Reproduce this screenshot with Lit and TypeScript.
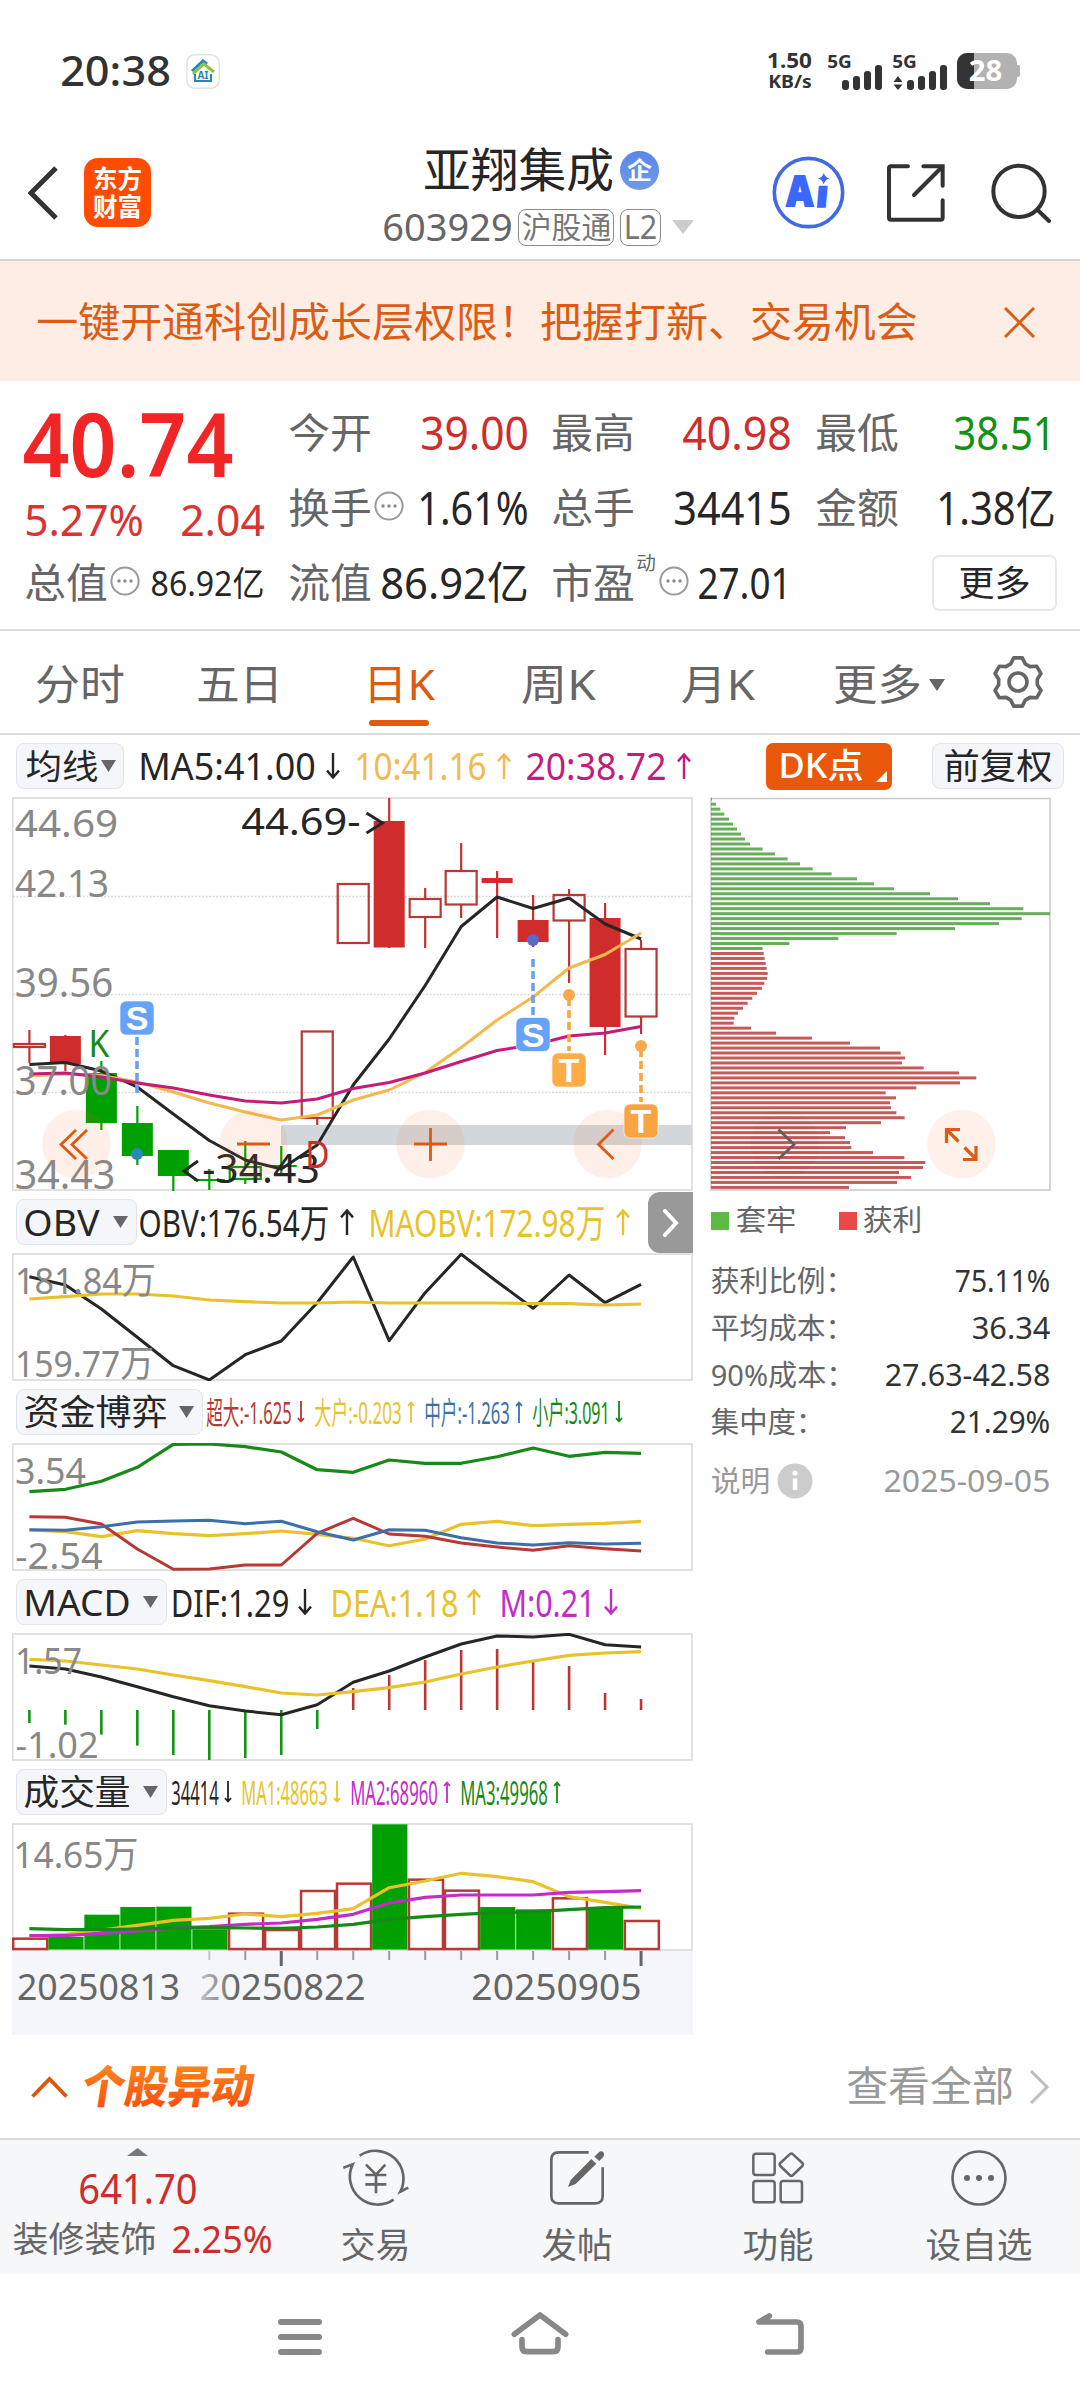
import { LitElement, html, svg, css } from "lit";
import { customElement } from "lit/decorators.js";

const RED = "#cf2d2b";
const LINE_RED = "#b83835";
const GREEN = "#00a000";
const DARK = "#262626";
const GREY = "#666666";
const YELLOW = "#e9c22b";
const AMBER = "#f3b94f";
const MAGENTA = "#c31c7b";
const VIOLET = "#c42cc9";
const BLUE = "#3d6fab";
const DEEP_GREEN = "#168a16";
const ORANGE = "#dc5a12";

/* Side bearing of the outer glyphs once the text is squeezed to width w. */
const bearing = (text: string, w: number, size: number) => {
  let em = 0;
  for (const c of text) em += c > "\u2e80" ? 1 : ".:".includes(c) ? 0.27 : c === "-" ? 0.32 : c === "%" ? 0.83 : 0.57;
  return size * 0.045 * Math.min(1, w / (em * size));
};

/* Text fitted to an exact ink width; the box is as tall as the capitals. */
const fit = (text: string, w: number, size: number, fill = DARK, weight = 400, cls = "") => {
  const h = Math.round(size * 0.714);
  const b = bearing(text, w, size);
  return html`<svg class="fit ${cls}" width=${w} height=${h} viewBox="0 0 ${w} ${h}">
    <text x=${-b} y=${h} font-size=${size} font-weight=${weight} fill=${fill}
      textLength=${w + 2 * b} lengthAdjust="spacingAndGlyphs">${text}</text>
  </svg>`;
};

const label = (text: string, x: number, base: number, w: number, size: number, fill = "#888888", weight = 400) => {
  const b = bearing(text, w, size);
  return svg`<text x=${x - b} y=${base} font-size=${size} font-weight=${weight} fill=${fill}
    textLength=${w + 2 * b} lengthAdjust="spacingAndGlyphs">${text}</text>`;
};

const cx = (i: number) => 29.4 + i * 35.98;

/* Series values are thirds of a pixel below the given origin. */
const series = (origin: number, vs: number[], stroke: string, width = 3.2) =>
  svg`<polyline fill="none" stroke=${stroke} stroke-width=${width} stroke-linejoin="round"
    points=${vs.map((v, i) => `${cx(i).toFixed(1)},${(origin + v / 3).toFixed(1)}`).join(" ")} />`;

const plain = (ys: number[], stroke: string) =>
  svg`<polyline fill="none" stroke=${stroke} stroke-width="3" stroke-linejoin="round"
    points=${ys.map((v, i) => `${cx(i).toFixed(1)},${v}`).join(" ")} />`;

type Candle = [kind: "solid" | "hollow" | "down" | "flat", top: number, bottom: number, high: number, low: number];
const candles: Candle[] = [
  ["hollow", 1044, 1047, 1030, 1063],
  ["solid", 1036, 1064, 1035, 1071],
  ["down", 1073, 1123, 1061, 1130],
  ["down", 1123, 1156, 1106, 1165],
  ["down", 1150, 1176, 1150, 1191],
  ["flat", 1180, 1180, 1169, 1190],
  ["flat", 1167, 1179, 1141, 1184],
  ["flat", 1166, 1166, 1146, 1175],
  ["hollow", 1031.5, 1118, 1031, 1125],
  ["hollow", 884, 943, 884, 943],
  ["solid", 821, 947.5, 798, 948],
  ["hollow", 899, 917, 888, 948],
  ["hollow", 871, 904.5, 843, 918],
  ["solid", 878, 883, 871, 938],
  ["solid", 920, 942, 895, 947],
  ["hollow", 895, 920.5, 889, 983],
  ["solid", 918, 1027, 903, 1055],
  ["hollow", 949, 1016.5, 940, 1034],
];

const drawCandle = ([kind, top, bottom, high, low]: Candle, i: number) => {
  const x = cx(i);
  const green = kind === "down" || kind === "flat";
  const color = green ? GREEN : kind === "solid" ? RED : LINE_RED;
  if (kind === "solid" || kind === "down") {
    return svg`<path d="M${x} ${high}V${low}" stroke=${color} stroke-width="2.2" />
      <rect x=${x - 15.5} y=${top} width="31" height=${bottom - top} fill=${color} />`;
  }
  if (top === bottom) {
    return svg`<path d="M${x} ${high}V${low}M${x - 15.5} ${top}H${x + 15.5}" stroke=${color} stroke-width="2.2" />`;
  }
  return svg`<path d="M${x} ${high}V${top}M${x} ${bottom}V${low}" stroke=${color} stroke-width="2.2" />
    <rect x=${x - 15.5} y=${top} width="31" height=${bottom - top} fill="none" stroke=${color} stroke-width="2.200" />`;
};

const ma5 = [1064.5, 1062.5, 1071, 1087, 1114, 1140.5, 1160, 1169, 1145, 1085, 1039, 985.5, 926.5, 897, 908.5, 898, 924, 939];
const ma10 = [1076, 1074, 1075.5, 1082, 1092, 1103, 1112, 1120, 1115, 1100, 1090, 1072.5, 1047.5, 1020, 997, 968, 954.5, 933];
const ma20 = [1074, 1073, 1077, 1083, 1088, 1095, 1101, 1103, 1099, 1088.5, 1082.5, 1073, 1061.5, 1050.5, 1045, 1036, 1033, 1026.5];

const trapped = [36, 48, 61, 73, 87, 99, 111, 123, 135, 150, 188, 225, 263, 300, 338, 395, 471, 522, 582, 690, 774, 870, 970, 1050, 965, 897, 765, 590, 415, 268, 188];
const profit = [191, 194, 197, 200, 203, 201, 193, 186, 171, 157, 143, 129, 114, 103, 101, 153, 228, 336, 450, 540, 602, 615, 606, 671, 777, 829, 780, 649, 557, 588, 570, 573, 589, 614, 543, 438, 390, 435, 450, 454, 519, 613, 676, 669, 597, 633, 591, 447];

const macdBars = [459, 464, 494, 527, 555, 570, 564, 555, 477, 354, 315, 270, 240, 237, 276, 288, 369, 387];
const volume: [number, boolean][] = [
  [1103, false], [1101, true], [1034, true], [1011, true], [1010, true], [1078, true],
  [1028, false], [1077, false], [960, false], [938, false], [763, true], [926, false],
  [959, false], [1011, true], [1018, true], [982, false], [1012, true], [1050, false],
];

const tri = (w: number, h: number, fill: string, cls = "") =>
  html`<svg class=${cls} width=${w} height=${h} viewBox="0 0 10 10" preserveAspectRatio="none"><path d="M0 0H10L5 10Z" fill=${fill} /></svg>`;

const arrow = (dir: "up" | "down", w: number, h: number, color: string) => html`
  <svg class="arrow" width=${w} height=${h} viewBox="0 0 ${w} ${h}">
    <path fill="none" stroke=${color} stroke-width=${w < 10 ? 1.8 : 2.4}
      d=${dir === "up"
        ? `M${w / 2} ${h}V1.5M1 ${w * 0.6}L${w / 2} 1.5L${w - 1} ${w * 0.6}`
        : `M${w / 2} 0V${h - 1.5}M1 ${h - w * 0.6}L${w / 2} ${h - 1.5}L${w - 1} ${h - w * 0.6}`} />
  </svg>`;

const reading = (t: string, w: number, size: number, color: string, dir: "up" | "down", small = false) => html`
  <span class="reading ${small ? "tight" : ""}">${fit(t, w, size, color)}${arrow(dir, small ? 8 : 14, small ? 22 : 26, color)}</span>`;

const info = html`<svg class="info" width="30" height="30" viewBox="0 0 30 30">
  <circle cx="15" cy="15" r="13.6" fill="none" stroke="#999" stroke-width="2" />
  <circle cx="9" cy="15" r="1.7" fill="#888" /><circle cx="15" cy="15" r="1.7" fill="#888" /><circle cx="21" cy="15" r="1.7" fill="#888" />
</svg>`;

const gearPath = (() => {
  const p: string[] = [];
  for (let k = 0; k < 6; k++) {
    for (const [da, r] of [[-22, 19.5], [-10, 24.5], [10, 24.5], [22, 19.5]]) {
      const a = ((-90 + k * 60 + da) * Math.PI) / 180;
      p.push(`${(26 + r * Math.cos(a)).toFixed(1)} ${(26 + r * Math.sin(a)).toFixed(1)}`);
    }
  }
  return `M${p.join("L")}Z`;
})();

const signal = (x: number) => [10, 14, 19, 25].map((h, i) =>
  svg`<rect x=${x + i * 11} y=${40 - h} width="7" height=${h} rx="3" fill="#333" />`);

const badge = (x: number, y: number, letter: string, color: string) => svg`
  <rect x=${x - 17} y=${y} width="34" height="34" rx="6" fill=${color} stroke="#fff" stroke-opacity=".6" />
  <text class="sans" x=${x} y=${y + 29} font-size="34" font-weight="700" fill="#fff" text-anchor="middle">${letter}</text>`;

const dash = (x: number, y1: number, y2: number, color: string) =>
  svg`<path d="M${x} ${y1}V${y2}" stroke=${color} stroke-width="3.6" stroke-dasharray="8 4" />`;

const bubble = (x: number) => svg`<circle cx=${x} cy="1144" r="34.3" fill="#f9702c" fill-opacity=".1" />`;

const frame = (top: number, h: number, body: unknown) => html`
  <svg class="plot" width="681" height=${h} viewBox="12 ${top} 681 ${h}">
    <rect x="12.7" y=${top + 1} width="679.3" height=${h - 2} fill="none" stroke="#dedede" stroke-width="1.8" />
    ${body}
  </svg>`;

@customElement("app-root")
export class AppRoot extends LitElement {
  static styles = css`
    :host { display: block; width: 1080px; height: 2400px; background: #fff; overflow: hidden;
      font-family: "Noto Sans", "Noto Sans CJK SC", sans-serif; }
    * { box-sizing: border-box; }
    svg { display: block; flex: none; }
    .fit { overflow: visible; }
    text { font-family: "Noto Sans", "Noto Sans CJK SC", sans-serif; }
    .sans { font-family: "Liberation Sans", Arial, sans-serif; }
    .row { display: flex; align-items: center; }
    .status { display: flex; align-items: center; justify-content: space-between; height: 126px; padding: 16px 60px 0 62px; }
    .status-left { display: flex; align-items: center; gap: 17px; }
    .nav { display: grid; grid-template-columns: 384px 310px 1fr; height: 135px; border-bottom: 2px solid #d6d6d6; }
    .nav-left { display: flex; align-items: center; gap: 26px; padding-left: 28px; }
    .logo { display: flex; flex-direction: column; align-items: center; justify-content: center; gap: 10px;
      width: 67px; height: 69px; border-radius: 14px; background: #ff4c02; }
    .titles { display: flex; flex-direction: column; align-items: center; padding-top: 15px; }
    .name { display: flex; align-items: center; gap: 8px; height: 58px; padding-left: 5px; }
    .ent { display: flex; align-items: center; justify-content: center; width: 39px; height: 39px; border-radius: 50%; background: linear-gradient(#5a86ea, #6f9ae8); }
    .code { display: flex; align-items: center; height: 56px; width: 310px; }
    .tag { display: flex; align-items: center; justify-content: center; height: 37px; width: 97px; border: 1.5px solid #8b8b8b; border-radius: 8px; margin-left: 7px; }
    .tag.level { width: 41px; margin-left: 6px; }
    .code-tri { margin-left: 11px; }
    .nav-right { display: flex; align-items: center; justify-content: flex-end; padding-right: 29px; }
    .share { margin: 0 46px 0 42px; }
    .banner { display: flex; align-items: center; justify-content: space-between; height: 120px; padding: 2px 45px 0 38px; background: #fdede4; }
    .quote { display: flex; justify-content: space-between; height: 250px; padding: 15px 26px 0; border-bottom: 2px solid #dcdcdc; }
    .col { display: flex; flex-direction: column; width: 237px; }
    .cell { display: flex; align-items: center; justify-content: space-between; height: 75px; }
    .price { height: 98px; }
    .change { height: 53px; }
    .key { display: flex; align-items: center; gap: 4px; height: 75px; }
    .info { margin-top: -5px; }
    .dyn { align-self: flex-start; margin-top: 10px; }
    .cap { height: 73px; }
    .more { display: flex; align-items: center; justify-content: center; align-self: flex-end; width: 125px; height: 56px;
      margin: 9px -3px 0 0; border: 2px solid #e6e9ec; border-radius: 7px; }
    .tabs { display: flex; height: 104px; border-bottom: 2px solid #dcdcdc; }
    .tab { display: flex; flex-direction: column; align-items: center; width: 159.5px; }
    .tab-name { display: flex; align-items: center; height: 89px; padding-top: 18px; }
    .bar { width: 60px; height: 6px; border-radius: 3px; background: #e8560a; }
    .tab-more { display: flex; align-items: center; gap: 9px; height: 89px; padding-top: 18px; margin-left: 37px; }
    .gear { margin: 25px 0 0 47px; }
    .tools { display: flex; align-items: center; height: 62px; padding: 0 16px; }
    .pick { display: flex; align-items: center; justify-content: space-between; height: 46px; padding: 0 8px; border: 1.5px solid #e1e4ea; border-radius: 8px; background: #f5f6f9; }
    .pick .fit, .reading .fit { margin-top: 1px; }
    .pick.p-ma { width: 108px; padding: 0 7px 0 10px; margin-right: 16px; }
    .pick.p-obv { width: 121px; margin-right: 3px; }
    .pick.p-fund { width: 187px; margin-right: 4px; }
    .pick.p-macd { width: 151px; margin-right: 5px; }
    .reading { display: flex; align-items: center; gap: 12px; margin-right: 16px; }
    .reading.tight { gap: 6px; margin-right: 10px; }
    .wide .reading { gap: 10px; margin-right: 20px; }
    .dk { display: flex; align-items: center; justify-content: space-between; width: 126px; height: 47px; padding: 0 5px 0 14px; margin-left: auto; border-radius: 7px; background: #e9570a; }
    .corner { align-self: flex-end; margin-bottom: 8px; }
    .adj { width: 132px; margin-left: 40px; justify-content: center; }
    .charts { display: flex; padding-left: 12px; }
    .left { width: 681px; }
    .plot { overflow: hidden; }
    .legend { display: flex; align-items: center; height: 62px; padding-left: 4px; }
    .next { display: flex; align-items: center; justify-content: center; width: 45px; height: 61px; margin: 1px 0 0 auto; border-radius: 12px 0 0 12px; background: #999; }
    .axis { display: block; background: #f5f6f9; }
    .right { width: 340px; margin-left: 17px; }
    .keys { display: flex; align-items: center; height: 59px; margin-bottom: 7px; }
    .sq { width: 18px; height: 18px; margin: 0 8px 0 1px; background: #5db846; }
    .sq.r { margin: 0 7px 0 44px; background: #e84a48; }
    .stat { display: flex; align-items: center; justify-content: space-between; height: 47px; padding: 1px 1px 0 2px; }
    .stat.note { height: 71px; }
    .events { display: flex; align-items: center; justify-content: space-between; height: 103px; padding: 0 30px 0 31px; }
    .ev-title { display: flex; align-items: center; gap: 14px; }
    .ev-more { display: flex; align-items: center; gap: 17px; }
    .dock { display: flex; height: 136px; border-top: 2px solid #d8dadd; background: #f6f7f9; }
    .index { display: flex; flex-direction: column; align-items: center; width: 275px; padding-top: 8px; }
    .index-val { display: flex; align-items: center; height: 66px; }
    .index-name { display: flex; align-items: center; gap: 18px; height: 34px; padding-left: 10px; }
    .item { display: flex; flex-direction: column; align-items: center; width: 201px; padding-top: 8px; }
    .item-name { display: flex; align-items: center; height: 78px; padding-top: 8px; }
    .sys { display: flex; align-items: center; justify-content: center; gap: 180px; height: 126px; }
  `;

  private statusBar() {
    return html`<div class="status">
      <div class="status-left">
        ${fit("20:38", 107, 42, "#333", 500)}
        <svg width="34" height="35" viewBox="0 0 34 35">
          <rect x=".8" y=".8" width="32.4" height="33.4" rx="8" fill="#fff" stroke="#e2e2e2" stroke-width="1.5" />
          <path d="M6 17L17 7L21 10" fill="none" stroke="#2a86b8" stroke-width="3" />
          <path d="M7 20L18 10L28 18" fill="none" stroke="#8cc63f" stroke-width="3" />
          <path d="M9 20V27H25V20" fill="none" stroke="#2a86b8" stroke-width="2" />
          <text x="17" y="25" font-size="10" font-weight="700" fill="#2a86b8" text-anchor="middle">AI</text>
        </svg>
      </div>
      <svg width="252" height="42" viewBox="0 0 252 42">
        ${label("1.50", 0, 18, 43, 22, "#333", 700)}
        ${label("KB/s", 1, 38, 42, 18, "#333", 700)}
        ${label("5G", 60, 18, 23, 18, "#333", 700)}
        ${signal(74)}
        ${label("5G", 125, 18, 23, 18, "#333", 700)}
        <path d="M125.5 32L130 26L134.5 32ZM125.5 34.5L130 40L134.5 34.5Z" fill="#333" />
        ${signal(139)}
        <rect x="189" y="3" width="60" height="36" rx="10" fill="#b2b2b2" />
        <path d="M206 3H199a10 10 0 0 0-10 10V29a10 10 0 0 0 10 10H206Z" fill="#333" />
        <rect x="247" y="15" width="5" height="12" rx="2" fill="#b2b2b2" />
        ${label("28", 202, 31, 31, 28, "#fff", 700)}
      </svg>
    </div>`;
  }

  private navBar() {
    return html`<div class="nav">
      <div class="nav-left">
        <svg width="30" height="54" viewBox="0 0 30 54"><path d="M28 2L3 27L28 52" fill="none" stroke="#333" stroke-width="5" /></svg>
        <div class="logo">${fit("东方", 47, 25, "#fff", 700)}${fit("财富", 47, 25, "#fff", 700)}</div>
      </div>
      <div class="titles">
        <div class="name">${fit("亚翔集成", 187, 47, DARK)}<div class="ent">${fit("企", 23, 24, "#fff", 700)}</div></div>
        <div class="code">
          ${fit("603929", 127, 39, GREY)}
          <div class="tag">${fit("沪股通", 87, 29.5, "#777")}</div>
          <div class="tag level">${fit("L2", 31, 32, "#777")}</div>
          ${tri(22, 14, "#ccc", "code-tri")}
        </div>
      </div>
      <div class="nav-right">
        <svg width="73" height="73" viewBox="636 350 220 220">
          <circle cx="746" cy="460" r="103" fill="none" stroke="#4169e1" stroke-width="11" />
          <text x="680" y="500" font-size="126" font-weight="900" fill="#3b66ff" stroke="#3b66ff" stroke-width="6" textLength="80" lengthAdjust="spacingAndGlyphs">A</text>
          <text x="766" y="504" font-size="112" font-weight="900" fill="#3b66ff" stroke="#3b66ff" stroke-width="4" transform="skewX(-5) translate(44 0)" textLength="38" lengthAdjust="spacingAndGlyphs">ı</text>
          <path d="M792 401Q796 414 809 418Q796 422 792 435Q788 422 775 418Q788 414 792 401Z" fill="#3b66ff" />
        </svg>
        <svg class="share" width="58" height="58" viewBox="983 373 174 174">
          <path d="M1046 380H995q-6 0-6 6V534q0 6 6 6h149q6 0 6-6V482M1150 438V380H1092M1148 382L1064 466" fill="none" stroke="#333" stroke-width="12" stroke-linecap="round" />
        </svg>
        <svg width="60" height="60" viewBox="1292 367 180 180">
          <circle cx="1376" cy="452" r="77" fill="none" stroke="#333" stroke-width="12" />
          <path d="M1432 508L1466 541" stroke="#333" stroke-width="12" stroke-linecap="round" />
        </svg>
      </div>
    </div>`;
  }

  private banner() {
    return html`<div class="banner">
      ${fit("一键开通科创成长层权限！把握打新、交易机会", 878, 41, "#dc5c14")}
      <svg width="31" height="31" viewBox="0 0 31 31"><path d="M1 1L30 30M30 1L1 30" stroke="#dc5c14" stroke-width="3" /></svg>
    </div>`;
  }

  private quote() {
    const k = (t: string) => fit(t, 80, 40.5, GREY);
    return html`<div class="quote">
      <div class="col">
        <div class="cell price">${fit("40.74", 204, 88, "#ef2625", 600)}</div>
        <div class="cell change">${fit("5.27%", 116, 44, "#d93332")}${fit("2.04", 81, 44, "#d93332")}</div>
        <div class="cell cap"><span class="key">${k("总值")}${info}</span>${fit("86.92亿", 111, 34, DARK)}</div>
      </div>
      <div class="col">
        <div class="cell">${k("今开")}${fit("39.00", 105, 45, RED)}</div>
        <div class="cell"><span class="key">${k("换手")}${info}</span>${fit("1.61%", 108, 45)}</div>
        <div class="cell">${k("流值")}${fit("86.92亿", 145, 44)}</div>
      </div>
      <div class="col">
        <div class="cell">${k("最高")}${fit("40.98", 106, 45, RED)}</div>
        <div class="cell">${k("总手")}${fit("34415", 115, 45)}</div>
        <div class="cell"><span class="key">${k("市盈")}${fit("动", 18, 19, GREY, 400, "dyn")}${info}</span>${fit("27.01", 91, 43)}</div>
      </div>
      <div class="col">
        <div class="cell">${k("最低")}${fit("38.51", 99, 45, "#109310")}</div>
        <div class="cell">${k("金额")}${fit("1.38亿", 116, 45)}</div>
        <div class="more">${fit("更多", 69, 35)}</div>
      </div>
    </div>`;
  }

  private tabs() {
    const tabs: [string, number][] = [["分时", 86], ["五日", 83], ["日K", 68], ["周K", 71], ["月K", 70]];
    return html`<div class="tabs">
      ${tabs.map(([t, w], i) => html`<div class="tab">
        <span class="tab-name">${fit(t, w, 42.5, i === 2 ? ORANGE : GREY)}</span>
        ${i === 2 ? html`<span class="bar"></span>` : ""}
      </div>`)}
      <span class="tab-more">${fit("更多", 85, 42.5, GREY)}${tri(16, 12, GREY)}</span>
      <svg class="gear" width="52" height="52" viewBox="0 0 52 52">
        <path d=${gearPath} fill="none" stroke=${GREY} stroke-width="3.6" stroke-linejoin="round" />
        <circle cx="26" cy="26" r="9" fill="none" stroke=${GREY} stroke-width="3.6" />
      </svg>
    </div>`;
  }

  private priceChart() {
    return frame(797, 394, svg`
      ${[896.5, 994.5, 1092.5].map((y) => svg`<path d="M13 ${y}H692" stroke="#dadada" stroke-width="1.3" stroke-dasharray="2 1.500" />`)}
      <rect x="281" y="1125" width="411" height="20" fill="#d3d7dc" />
      ${candles.map(drawCandle)}
      ${plain(ma5, DARK)}${plain(ma10, AMBER)}${plain(ma20, MAGENTA)}
      ${label("44.69", 16.5, 837, 100, 39)}
      ${label("42.13", 16.5, 897, 91, 39)}
      ${label("39.56", 16.5, 996.5, 95, 40)}
      ${label("37.00", 16.5, 1094.5, 94, 40)}
      ${label("34.43", 16.5, 1188.5, 97, 40)}
      ${label("44.69-", 243, 835, 116, 39, DARK)}
      <path d="M366.5 813L382.5 823L366.5 833" fill="none" stroke=${DARK} stroke-width="3" />
      <path d="M198 1161L184 1171L198 1181" fill="none" stroke=${DARK} stroke-width="3" />
      ${label("-34.43", 204, 1182.5, 114, 40, DARK)}
      ${label("K", 90, 1057, 18, 39, DEEP_GREEN)}
      ${label("D", 307, 1168, 21, 39, RED)}
      ${dash(137, 1037, 1093, "#6aa2ec")}
      ${badge(137, 1001, "S", "#64a3f8")}
      <circle cx="137" cy="1154" r="6" fill="#2f86b8" />
      ${dash(533, 959, 1015, "#6aa2ec")}
      ${badge(533, 1017.5, "S", "#64a3f8")}
      <circle cx="533" cy="940" r="6" fill="#5a68c8" />
      ${dash(569, 998, 1051, "#fba53b")}
      <circle cx="569" cy="995" r="6" fill="#fba94b" />
      ${badge(569, 1053, "T", "#fdac47")}
      ${dash(641, 1049, 1102, "#fba53b")}
      <circle cx="641" cy="1046" r="6" fill="#fba94b" />
      ${bubble(76.5)}${bubble(253.5)}${bubble(430.5)}${bubble(607.5)}
      ${badge(641, 1104, "T", "#f9a440")}
      <g fill="none" stroke=${ORANGE} stroke-width="2.8">
        <path d="M76 1130L61 1144.5L76 1159M87 1130L72 1144.5L87 1159" />
        <path d="M237 1144H270M414 1144H447M430.5 1128V1161" />
        <path d="M613.5 1129.5L598.5 1144.5L613.5 1159" />
      </g>`);
  }

  private costChart() {
    return html`<svg width="341" height="394" viewBox="710 797 341 394">
      <rect x="711" y="798.5" width="339" height="391.5" fill="none" stroke="#c9c9c9" stroke-width="1.5" />
      ${[...trapped, ...profit].map((v, i) =>
        svg`<rect x="711" y=${(797.7 + i * 4.977).toFixed(2)} width=${(v - 33) / 3} height="3" fill=${i < trapped.length ? "#68ad5b" : "#c55a58"} />`)}
      <circle cx="784.5" cy="1144" r="34.3" fill="#000" fill-opacity=".025" />
      <path d="M778.5 1129.5L794 1144.5L778.5 1159" fill="none" stroke="#6d5a5a" stroke-width="2.8" />
      <circle cx="961.5" cy="1144" r="34.3" fill="#fff1e9" />
      <path d="M960 1129.5H946.5V1143M948 1131L958.5 1141.5M976 1146V1159.5H963M975 1158L964.5 1147.5" fill="none" stroke=${ORANGE} stroke-width="3.2" />
    </svg>`;
  }

  private pick(t: string, w: number, size: number, cls: string) {
    return html`<div class="pick ${cls}">${fit(t, w, size)}${tri(15, 12, GREY)}</div>`;
  }

  private leftColumn() {
    return html`<div class="left">
      ${this.priceChart()}
      <div class="legend">
        ${this.pick("OBV", 73, 37, "p-obv")}
        ${reading("OBV:176.54万", 188, 39, DARK, "up")}
        ${reading("MAOBV:172.98万", 234, 39, YELLOW, "up")}
        <div class="next"><svg width="17" height="28" viewBox="0 0 17 28"><path d="M3 2L14 14L3 26" fill="none" stroke="#fff" stroke-width="4" stroke-linecap="round" /></svg></div>
      </div>
      ${frame(1253, 128, svg`
        ${series(1180, [290, 315, 387, 472, 557, 600, 524, 483, 368, 231, 482, 338, 223, 305, 385, 285, 368, 313], DARK, 3)}
        ${series(1180, [357, 350, 342, 342, 348, 360, 365, 369, 369, 366, 369, 369, 369, 369, 371, 371, 375, 372], YELLOW)}
        ${label("181.84万", 16.5, 1294, 138, 37)}
        ${label("159.77万", 16.5, 1377, 136, 37)}`)}
      <div class="legend">
        ${this.pick("资金博弈", 141, 35, "p-fund")}
        ${reading("超大:-1.625", 84, 31, LINE_RED, "down", true)}
        ${reading("大户:-0.203", 86, 31, YELLOW, "up", true)}
        ${reading("中户:-1.263", 84, 31, BLUE, "up", true)}
        ${reading("小户:3.091", 76, 31, DEEP_GREEN, "down", true)}
      </div>
      ${frame(1443, 128, svg`
        ${series(1180, [1050, 1055, 1070, 1052, 1061, 1067, 1061, 1053, 1063, 1075, 1097, 1077, 1033, 1024, 1037, 1033, 1030, 1024], YELLOW)}
        ${series(1180, [1010, 1012, 1032, 1107, 1168, 1167, 1155, 1155, 1060, 1015, 1062, 1069, 1089, 1101, 1111, 1097, 1106, 1113], LINE_RED, 3)}
        ${series(1180, [1049, 1051, 1040, 1026, 1023, 1021, 1031, 1024, 1055, 1080, 1049, 1051, 1073, 1089, 1095, 1088, 1092, 1090], BLUE, 3)}
        ${series(1180, [935, 928, 904, 862, 793, 792, 800, 816, 869, 877, 840, 850, 850, 830, 804, 829, 817, 820], DEEP_GREEN)}
        ${label("3.54", 16.5, 1484, 68, 37)}
        ${label("-2.54", 17, 1569, 84, 37)}`)}
      <div class="legend wide">
        ${this.pick("MACD", 104, 37, "p-macd")}
        ${reading("DIF:1.29", 116, 39, DARK, "down")}
        ${reading("DEA:1.18", 125, 39, YELLOW, "up")}
        ${reading("M:0.21", 93, 39, VIOLET, "down")}
      </div>
      ${frame(1633, 128, svg`
        ${macdBars.map((v, i) => svg`<path d="M${cx(i)} 1710V${1570 + v / 3}" stroke=${i < 9 ? "#149414" : LINE_RED} stroke-width="2.6" />`)}
        ${series(1570, [288, 297, 321, 350, 380, 407, 423, 434, 404, 337, 303, 261, 222, 198, 201, 193, 224, 231], DARK, 3)}
        ${series(1570, [268, 273, 285, 297, 315, 332, 350, 369, 375, 365, 353, 336, 312, 291, 273, 256, 249, 245], YELLOW)}
        ${label("1.57", 16.5, 1674, 64, 37)}
        ${label("-1.02", 17, 1757.5, 80, 37)}`)}
      <div class="legend">
        ${this.pick("成交量", 104, 35, "p-macd")}
        ${reading("34414", 46, 33, DARK, "down", true)}
        ${reading("MA1:48663", 85, 33, YELLOW, "down", true)}
        ${reading("MA2:68960", 86, 33, VIOLET, "up", true)}
        ${reading("MA3:49968", 86, 33, DEEP_GREEN, "up", true)}
      </div>
      ${frame(1823, 128, svg`
        ${volume.map(([v, fall], i) => {
          const y = 1570 + v / 3;
          const x = 12 + i * 35.98;
          return fall
            ? svg`<rect x=${x + 0.4} y=${y} width="35.2" height=${1949.5 - y} fill=${GREEN} />`
            : svg`<rect x=${x + 1.2} y=${y + 1} width="34" height=${1948 - y} fill="#fff" stroke=${LINE_RED} stroke-width="2.5" />`;
        })}
        ${series(1570, [1098, 1093, 1080, 1066, 1051, 1045, 1032, 1040, 1030, 1016, 953, 933, 910, 920, 935, 980, 997, 1015], YELLOW)}
        ${series(1570, [1097, 1097, 1090, 1083, 1074, 1070, 1063, 1059, 1048, 1033, 999, 982, 975, 975, 975, 967, 965, 962], VIOLET)}
        ${series(1570, [1076, 1079, 1079, 1077, 1074, 1073, 1074, 1075, 1071, 1063, 1048, 1040, 1033, 1028, 1025, 1019, 1013, 1011], DEEP_GREEN)}
        ${label("14.65万", 15, 1867.5, 122, 37)}`)}
      <svg class="axis" width="681" height="84" viewBox="12 1951 681 84">
        <defs><linearGradient id="fade"><stop offset="0" stop-color="#c4c4c4" /><stop offset=".22" stop-color="#666" /></linearGradient></defs>
        ${Array.from({ length: 13 }, (_, k) => k + 5).map((i) => {
          const major = i === 7 || i === 17;
          return svg`<path d="M${cx(i)} 1951V${major ? 1966 : 1960}" stroke=${major ? "#666" : i === 5 ? "#c4c4c4" : "#999"} stroke-width=${major ? 3 : 2} />`;
        })}
        ${label("20250813", 18.5, 2000, 160, 37, GREY)}
        ${label("20250822", 201, 2000, 163, 37, "url(#fade)")}
        ${label("20250905", 473, 2000, 167, 37, GREY)}
      </svg>
    </div>`;
  }

  private rightColumn() {
    const stats: [string, number, string, number][] = [
      ["获利比例：", 141, "75.11%", 93],
      ["平均成本：", 141, "36.34", 76],
      ["90%成本：", 142, "27.63-42.58", 163],
      ["集中度：", 111, "21.29%", 98],
    ];
    return html`<div class="right">
      ${this.costChart()}
      <div class="keys">
        <span class="sq"></span>${fit("套牢", 58, 29, GREY)}
        <span class="sq r"></span>${fit("获利", 57, 29, GREY)}
      </div>
      ${stats.map(([k, kw, v, vw]) => html`<div class="stat">${fit(k, kw, 29, GREY)}${fit(v, vw, 31.5, "#333")}</div>`)}
      <div class="stat note">
        <span class="row">${fit("说明", 57, 29, "#999")}
          <svg width="52" height="36" viewBox="0 0 52 36"><circle cx="26" cy="18" r="17.5" fill="#ccc" /><circle cx="26" cy="10" r="2.6" fill="#fff" /><path d="M26 15.5V27" stroke="#fff" stroke-width="4.5" /></svg>
        </span>
        ${fit("2025-09-05", 164, 31.5, "#999")}
      </div>
    </div>`;
  }

  private events() {
    return html`<div class="events">
      <div class="ev-title">
        <svg width="37" height="22" viewBox="0 0 37 22"><path d="M1.5 20.5L18.5 3L35.5 20.5" fill="none" stroke="#e0540c" stroke-width="3.8" /></svg>
        <svg width="174" height="44" viewBox="0 0 174 44">
          <defs><linearGradient id="flame" x1="0" y1="0" x2="0" y2="1"><stop offset=".1" stop-color="#ff8a1c" /><stop offset=".8" stop-color="#fb5410" /></linearGradient></defs>
          <text x="4" y="38" font-size="45" font-weight="900" fill="url(#flame)" textLength="172" lengthAdjust="spacingAndGlyphs" transform="skewX(-9)">个股异动</text>
        </svg>
      </div>
      <div class="ev-more">
        ${fit("查看全部", 164, 41, "#999")}
        <svg width="21" height="36" viewBox="0 0 21 36"><path d="M2 2L18 18L2 34" fill="none" stroke="#bdbdbd" stroke-width="3" /></svg>
      </div>
    </div>`;
  }

  private dock() {
    const icons: [string, number, unknown][] = [
      ["交易", 67, html`<svg width="68" height="60" viewBox="65 24 204 180"><path fill="none" stroke=${GREY} stroke-width="8" d="M118 47A84 84 0 0 1 240 155L264 143M220 179A84 84 0 0 1 97 73L69 83M137 74L167 104L195 74M167 104V160M135 105H198M135 133H198" /></svg>`],
      ["发帖", 68, html`<svg width="60" height="60" viewBox="681 24 180 180">
        <path fill="none" stroke=${GREY} stroke-width="8" d="M806 37H716q-22 0-22 22V168q0 22 22 22H826q22 0 22-22V82" />
        <path fill=${GREY} d="M744 141L752 120L814 57L829 71L767 132ZM823 50L835 38Q844 30 850 37Q855 44 849 52L838 63Z" /></svg>`],
      ["功能", 68, html`<svg width="60" height="60" viewBox="1285 24 180 180"><g fill="none" stroke=${GREY} stroke-width="7.5" stroke-linejoin="round">
        <rect x="1301" y="41" width="64" height="64" rx="8" /><rect x="1301" y="123" width="64" height="64" rx="8" /><rect x="1383" y="123" width="64" height="64" rx="8" />
        <path d="M1410 43Q1415 38 1420 43L1448 69Q1452 73 1448 78L1420 105Q1415 110 1410 105L1382 78Q1378 73 1382 69Z" /></g></svg>`],
      ["设自选", 104, html`<svg width="60" height="60" viewBox="0 0 60 60"><circle cx="30" cy="30" r="26.5" fill="none" stroke=${GREY} stroke-width="2.6" />
        <circle cx="18" cy="30" r="3" fill=${GREY} /><circle cx="30" cy="30" r="3" fill=${GREY} /><circle cx="42" cy="30" r="3" fill=${GREY} /></svg>`],
    ];
    return html`<div class="dock">
      <div class="index">
        <svg width="21" height="8" viewBox="0 0 21 8"><path d="M0 8L10.5 0L21 8Z" fill="#777" /></svg>
        <span class="index-val">${fit("641.70", 116, 42, RED)}</span>
        <span class="index-name">${fit("装修装饰", 141, 35, GREY)}${fit("2.25%", 98, 38, RED)}</span>
      </div>
      ${icons.map(([t, w, icon]) => html`<div class="item">${icon}<span class="item-name">${fit(t, w, 35, GREY)}</span></div>`)}
    </div>`;
  }

  private systemBar() {
    return html`<div class="sys">
      <svg width="60" height="60" viewBox="0 0 60 60"><path d="M11 15H49M11 30H49M11 45H49" stroke="#888" stroke-width="6" stroke-linecap="round" /></svg>
      <svg width="60" height="60" viewBox="570 501 180 180"><path fill="none" stroke="#888" stroke-width="17" stroke-linecap="round" stroke-linejoin="round" d="M583 583L660 525L737 583M606 599V620q0 15 15 15H699q15 0 15-15V599" /></svg>
      <svg width="60" height="60" viewBox="1290 501 180 180"><path fill="none" stroke="#888" stroke-width="17" stroke-linecap="round" stroke-linejoin="round" d="M1348 528L1317 546H1430q13 0 13 13V623q0 13-13 13H1343" /></svg>
    </div>`;
  }

  render() {
    return html`
      ${this.statusBar()}
      ${this.navBar()}
      ${this.banner()}
      ${this.quote()}
      ${this.tabs()}
      <div class="tools">
        ${this.pick("均线", 70, 34, "p-ma")}
        ${reading("MA5:41.00", 174, 38, DARK, "down")}
        ${reading("10:41.16", 129, 38, AMBER, "up")}
        ${reading("20:38.72", 138, 38, MAGENTA, "up")}
        <div class="dk">${fit("DK点", 82, 34, "#fff", 500)}<svg class="corner" width="11" height="11" viewBox="0 0 11 11"><path d="M11 0V11H0Z" fill="#fff" /></svg></div>
        <div class="pick adj">${fit("前复权", 106, 35)}</div>
      </div>
      <div class="charts">
        ${this.leftColumn()}
        ${this.rightColumn()}
      </div>
      ${this.events()}
      ${this.dock()}
      ${this.systemBar()}
    `;
  }
}
